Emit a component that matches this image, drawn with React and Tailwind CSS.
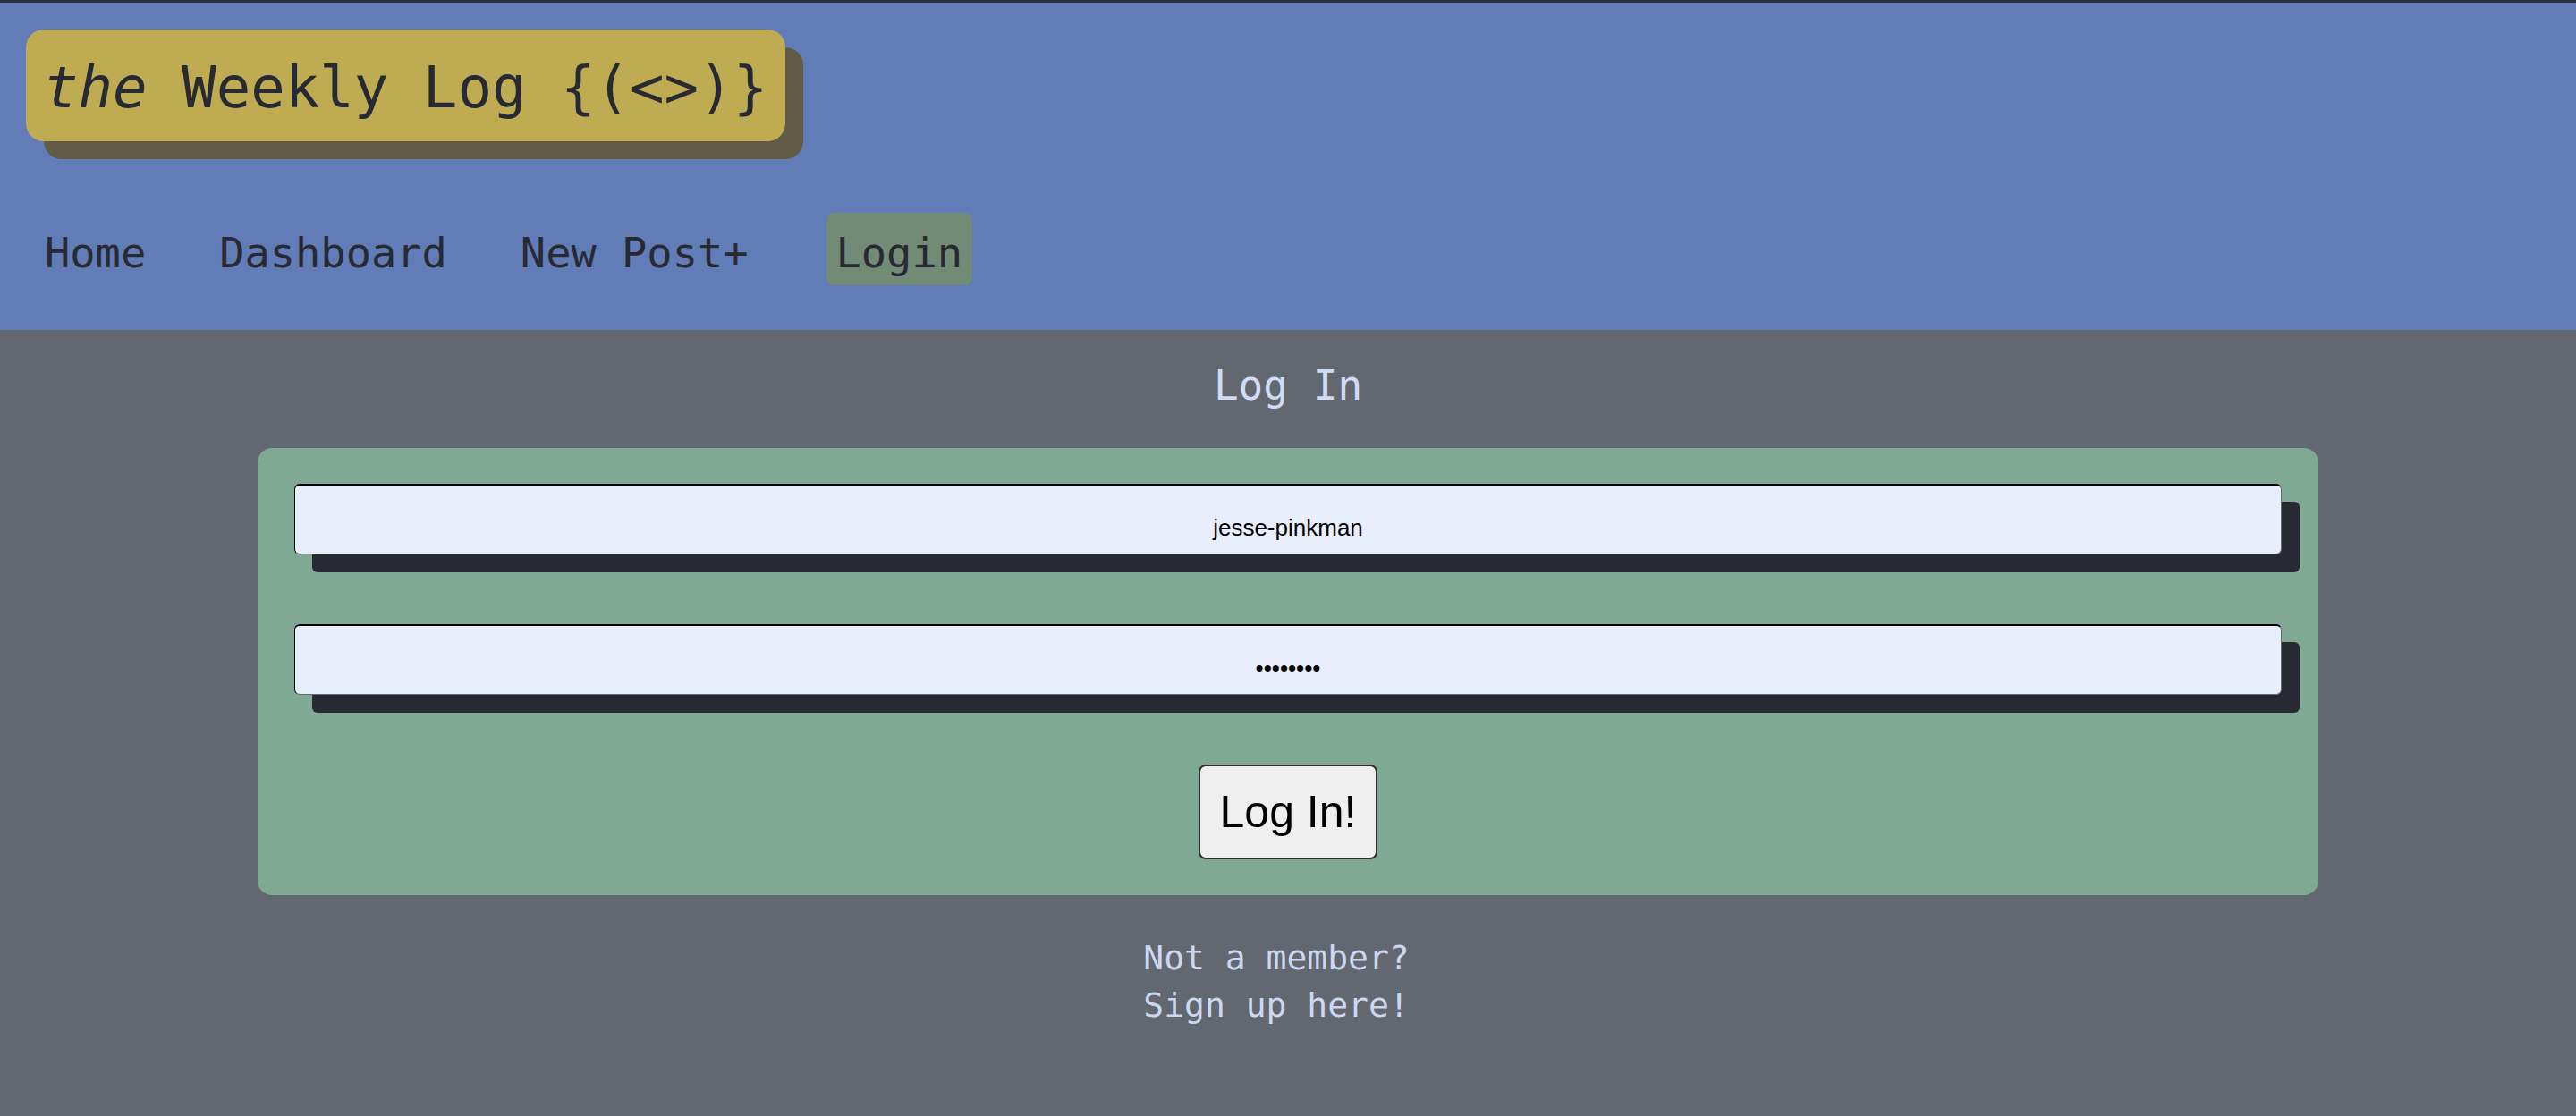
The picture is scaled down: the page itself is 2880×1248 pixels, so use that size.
import React from 'react';

const mono = "font-['DejaVu_Sans_Mono','Liberation_Mono',monospace]";
const sans = "font-['Liberation_Sans',Arial,sans-serif]";

const NavLink = ({ label, active }) => (
  <a
    href="#"
    className={`block h-[81px] px-[11px] pt-[8px] leading-[73px] text-[47px] rounded-[8px] text-[#272a33] ${active ? 'bg-[#718b77]' : ''}`}
  >
    {label}
  </a>
);

const Header = () => (
  <header className={`bg-[#627cb7] border-t-[3px] border-[#2a2f3b] pt-[30px] pb-[50px] px-[29px] ${mono}`}>
    {/* Logo */}
    <div className="inline-block h-[125px] px-5 pt-[6px] leading-[119px] text-[64px] text-[#272a33] bg-[#bfab52] rounded-[20px] shadow-[20px_20px_0px_#625c46]">
      <span className="italic">the</span> Weekly Log {'{(<>)}'}
    </div>

    {/* Nav */}
    <nav className="mt-[80px] pl-[10px] flex items-center gap-[60px]">
      <NavLink label="Home" />
      <NavLink label="Dashboard" />
      <NavLink label="New Post+" />
      <div className="ml-[16px]">
        <NavLink label="Login" active />
      </div>
    </nav>
  </header>
);

const Field = ({ type, value }) => (
  <input
    type={type}
    value={value}
    readOnly
    className={`w-full h-[79px] pt-[18px] bg-[#e8eefc] text-center text-[26px] text-black rounded-[6px] border border-t-2 border-black border-r-[#6b6b6b] border-b-[#6b6b6b] shadow-[20px_20px_0px_#272a33] outline-none ${sans}`}
  />
);

const LoginForm = () => (
  <main className={`pt-[35px] pb-[60px] ${mono}`}>
    <h2 className="text-center text-[46px] leading-[55px] text-[#d0dcf5]">Log In</h2>

    <form
      className="mt-[42px] mx-auto w-4/5 bg-[#7fa994] rounded-2xl px-[41px] py-10 flex flex-col items-center gap-[78px]"
      onSubmit={(e) => e.preventDefault()}
    >
      <Field type="text" value="jesse-pinkman" />
      <Field type="password" value="password" />
      <button
        type="submit"
        className={`px-[22px] py-[23px] text-[50px] leading-[56px] text-black bg-[#efefef] border-2 border-[#2e2e2e] rounded-[8px] ${sans}`}
      >
        Log In!
      </button>
    </form>

    <div className="mt-[44px] pr-[26px] text-center text-[38px] leading-[53px] text-[#cbd8f0]">
      <p>Not a member?</p>
      <a href="#">Sign up here!</a>
    </div>
  </main>
);

export default function App() {
  return (
    <div className="min-h-screen bg-[#636770]">
      <Header />
      <LoginForm />
    </div>
  );
}
